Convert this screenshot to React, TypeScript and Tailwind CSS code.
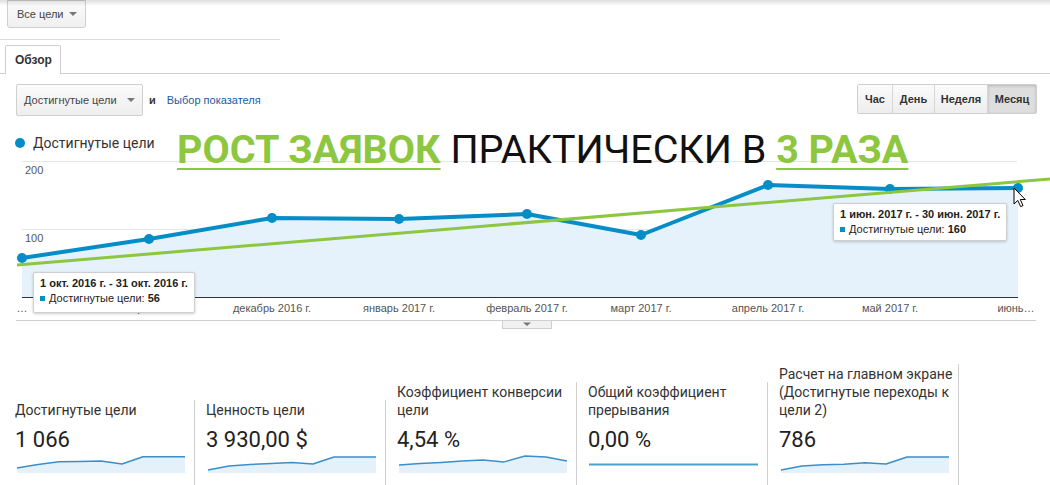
import React from "react";

const pts: [number, number][] = [
  [22, 103],
  [149, 84],
  [272, 63],
  [399, 64],
  [527, 59],
  [641, 80],
  [768, 30],
  [890, 34],
  [1018, 33],
];
const labels = [
  "…",
  "ноябрь 2016 г.",
  "декабрь 2016 г.",
  "январь 2017 г.",
  "февраль 2017 г.",
  "март 2017 г.",
  "апрель 2017 г.",
  "май 2017 г.",
  "июнь…",
];
const linePath = pts.map((p, i) => `${i ? "L" : "M"}${p[0]} ${p[1]}`).join(" ");
const areaPath = `${linePath} L1018 142 L22 142 Z`;

function Spark({ r, flat }: { r?: number[]; flat?: boolean }) {
  if (flat || !r) {
    return (
      <svg width="172" height="20" className="block">
        <line x1="1" y1="10.5" x2="170" y2="10.5" stroke="#4a9fd5" strokeWidth="2" />
      </svg>
    );
  }
  const p = r.map((v, i) => [2 + i * 21, 19 - v * 17]);
  const d = p.map((q, i) => `${i ? "L" : "M"}${q[0]} ${q[1].toFixed(1)}`).join(" ");
  return (
    <svg width="172" height="20" className="block">
      <path d={`${d} L170 19 L2 19 Z`} fill="#e4f0fa" />
      <path d={d} fill="none" stroke="#3a8fcb" strokeWidth="1.5" strokeLinejoin="round" />
    </svg>
  );
}

function Card({ title, value, spark }: { title: React.ReactNode; value: string; spark: React.ReactNode }) {
  return (
    <div className="w-[191px] shrink-0 border-r border-[#cfcfcf] pl-[11px] pr-[10px] pt-[1px] pb-[20px] font-['Roboto','Liberation_Sans',sans-serif]">
      <div className="text-[14px] leading-[18px] text-[#333] whitespace-nowrap">{title}</div>
      <div className="mt-[8px] text-[22px] leading-[26px] text-[#222]">{value}</div>
      <div className="mt-[1px]">{spark}</div>
    </div>
  );
}

function Caret() {
  return (
    <span className="inline-block w-0 h-0 border-l-[4px] border-r-[4px] border-t-[4px] border-l-transparent border-r-transparent border-t-[#777]" />
  );
}

export default function App() {
  return (
    <div className="relative w-[1050px] h-[485px] overflow-hidden bg-white font-['Liberation_Sans',Arial,sans-serif] text-[#333]">
      {/* top row */}
      <div className="h-[40px] w-[280px] border-b border-[#dcdcdc]">
        <div className="ml-[7px] h-[28px] w-[79px] flex items-center justify-between pl-[9px] pr-[8px] border border-[#cfcfcf] rounded-b-[3px] bg-gradient-to-b from-[#fbfbfb] to-[#f0f0f0] text-[11px] text-[#444]">
          <span>Все цели</span>
          <Caret />
        </div>
      </div>

      {/* tabs */}
      <div className="pt-[5px] border-b border-[#cfcfcf] flex">
        <div className="ml-[5px] -mb-px h-[29px] w-[56px] border border-b-0 border-[#cfcfcf] rounded-t-[2px] bg-white flex items-center pl-[9px] text-[12px] font-bold text-[#333]">
          Обзор
        </div>
      </div>

      {/* controls */}
      <div className="flex items-start justify-between pl-[16px] pr-[13px] pt-[10px]">
        <div className="flex items-center h-[32px]">
          <div className="h-[32px] w-[127px] flex items-center justify-between pl-[7px] pr-[7px] border border-[#cfcfcf] rounded-[2px] bg-gradient-to-b from-[#fbfbfb] to-[#eeeeee] text-[11px] text-[#444]">
            <span>Достигнутые цели</span>
            <Caret />
          </div>
          <span className="ml-[6px] text-[11px] font-bold text-[#333]">и</span>
          <span className="ml-[11px] text-[11px] text-[#1b5aa5]">Выбор показателя</span>
        </div>
        <div className="flex h-[30px] border border-[#cfcfcf] rounded-[2px] text-[11px] font-bold text-[#333]">
          <div className="w-[35px] flex items-center justify-center bg-gradient-to-b from-[#fbfbfb] to-[#ededed] border-r border-[#d6d6d6]">Час</div>
          <div className="w-[42px] flex items-center justify-center bg-gradient-to-b from-[#fbfbfb] to-[#ededed] border-r border-[#d6d6d6]">День</div>
          <div className="w-[53px] flex items-center justify-center bg-gradient-to-b from-[#fbfbfb] to-[#ededed] border-r border-[#d6d6d6]">Неделя</div>
          <div className="w-[48px] flex items-center justify-center bg-[#dedede] shadow-[inset_0_1px_3px_rgba(0,0,0,0.18)]">Месяц</div>
        </div>
      </div>

      {/* chart */}
      <div className="relative pt-[15px]">
        <div className="h-[24px] flex items-center pl-[15px]">
          <span className="w-[10px] h-[10px] rounded-full bg-[#058dc7]" />
          <span className="ml-[8px] text-[14px] text-[#333] font-['Roboto','Liberation_Sans',sans-serif]">Достигнутые цели</span>
        </div>
        <svg width="1050" height="175" className="block">
          <line x1="22" y1="6.5" x2="1017" y2="6.5" stroke="#e6e6e6" />
          <line x1="22" y1="74.5" x2="1017" y2="74.5" stroke="#e6e6e6" />
          <path d={areaPath} fill="#e6f2fb" />
          <line x1="22" y1="142.5" x2="1018" y2="142.5" stroke="#333" />
          <text x="25" y="19" fontSize="11" fill="#555" fontFamily="Liberation Sans, Arial, sans-serif">200</text>
          <text x="25" y="87" fontSize="11" fill="#555" fontFamily="Liberation Sans, Arial, sans-serif">100</text>
          <path d={linePath} fill="none" stroke="#058dc7" strokeWidth="4" strokeLinejoin="round" />
          {pts.map((p, i) => (
            <circle key={i} cx={p[0]} cy={p[1]} r="5" fill="#058dc7" />
          ))}
          <line x1="17" y1="110" x2="1050" y2="24" stroke="#8dc63f" strokeWidth="3" />
          {pts.map((p, i) => (
            <text
              key={i}
              x={i === 8 ? 1016 : p[0]}
              y="157"
              fontSize="11"
              fill="#555"
              textAnchor="middle"
              fontFamily="Liberation Sans, Arial, sans-serif"
            >
              {labels[i]}
            </text>
          ))}
          <line x1="16" y1="165.5" x2="1036" y2="165.5" stroke="#d0d0d0" />
          <rect x="502.5" y="165.5" width="49" height="8" fill="#f1f1f1" stroke="#cfcfcf" />
          <polygon points="523,167.5 531,167.5 527,171" fill="#777" />
        </svg>

        {/* headline */}
        <div className="absolute left-[177px] top-[14px] whitespace-nowrap text-[39.5px] leading-[40px] font-['Roboto','Liberation_Sans',sans-serif]">
          <span className="font-bold text-[#8dc63f] underline decoration-2 underline-offset-[5px] decoration-[#8dc63f]">РОСТ ЗАЯВОК</span>
          <span className="text-[#111]"> ПРАКТИЧЕСКИ В </span>
          <span className="font-bold text-[#8dc63f] underline decoration-2 underline-offset-[5px] decoration-[#8dc63f]">3 РАЗА</span>
        </div>

        {/* tooltip 1 */}
        <div className="absolute left-[33px] top-[156px] w-[162px] h-[41px] bg-white border border-[#cfcfcf] rounded-[2px] shadow-[0_1px_3px_rgba(0,0,0,0.2)] pl-[6px] pt-[3px] text-[11px] leading-[15px] text-[#222]">
          <div className="font-bold">1 окт. 2016 г. - 31 окт. 2016 г.</div>
          <div className="flex items-center">
            <span className="w-[5px] h-[5px] bg-[#058dc7] mr-[4px]" />
            <span>Достигнутые цели: <b>56</b></span>
          </div>
        </div>

        {/* tooltip 2 */}
        <div className="absolute left-[833px] top-[87px] w-[174px] h-[38px] bg-white border border-[#cfcfcf] rounded-[2px] shadow-[0_1px_3px_rgba(0,0,0,0.2)] pl-[6px] pt-[3px] text-[11px] leading-[15px] text-[#222]">
          <div className="font-bold">1 июн. 2017 г. - 30 июн. 2017 г.</div>
          <div className="flex items-center">
            <span className="w-[5px] h-[5px] bg-[#058dc7] mr-[4px]" />
            <span>Достигнутые цели: <b>160</b></span>
          </div>
        </div>

        {/* cursor */}
        <svg className="absolute left-[1013px] top-[71px]" width="14" height="22" viewBox="0 0 14 22">
          <path d="M1 1 L1 17 L4.8 13.4 L7.6 19.6 L10 18.6 L7.3 12.5 L12.3 12.5 Z" fill="#fff" stroke="#000" strokeWidth="1" strokeLinejoin="round" />
        </svg>
      </div>

      {/* scorecards */}
      <div className="mt-[34px] flex items-end pl-[4px]">
        <Card title="Достигнутые цели" value="1 066" spark={<Spark r={[0.3, 0.5, 0.66, 0.68, 0.7, 0.53, 0.96, 0.96, 0.96]} />} />
        <Card title="Ценность цели" value="3 930,00 $" spark={<Spark r={[0.18, 0.41, 0.5, 0.55, 0.62, 0.53, 0.94, 0.94, 0.94]} />} />
        <Card
          title={<>Коэффициент конверсии<br />цели</>}
          value="4,54 %"
          spark={<Spark r={[0.47, 0.55, 0.62, 0.7, 0.76, 0.65, 1.0, 0.94, 0.7]} />}
        />
        <Card title={<>Общий коэффициент<br />прерывания</>} value="0,00 %" spark={<Spark flat />} />
        <Card
          title={<>Расчет на главном экране<br />(Достигнутые переходы к<br />цели 2)</>}
          value="786"
          spark={<Spark r={[0.18, 0.41, 0.48, 0.52, 0.6, 0.53, 0.94, 0.94, 0.94]} />}
        />
      </div>

      {/* top shadow */}
      <div className="absolute left-0 top-0 w-full h-[6px] bg-gradient-to-b from-[rgba(0,0,0,0.13)] to-transparent pointer-events-none" />
    </div>
  );
}
